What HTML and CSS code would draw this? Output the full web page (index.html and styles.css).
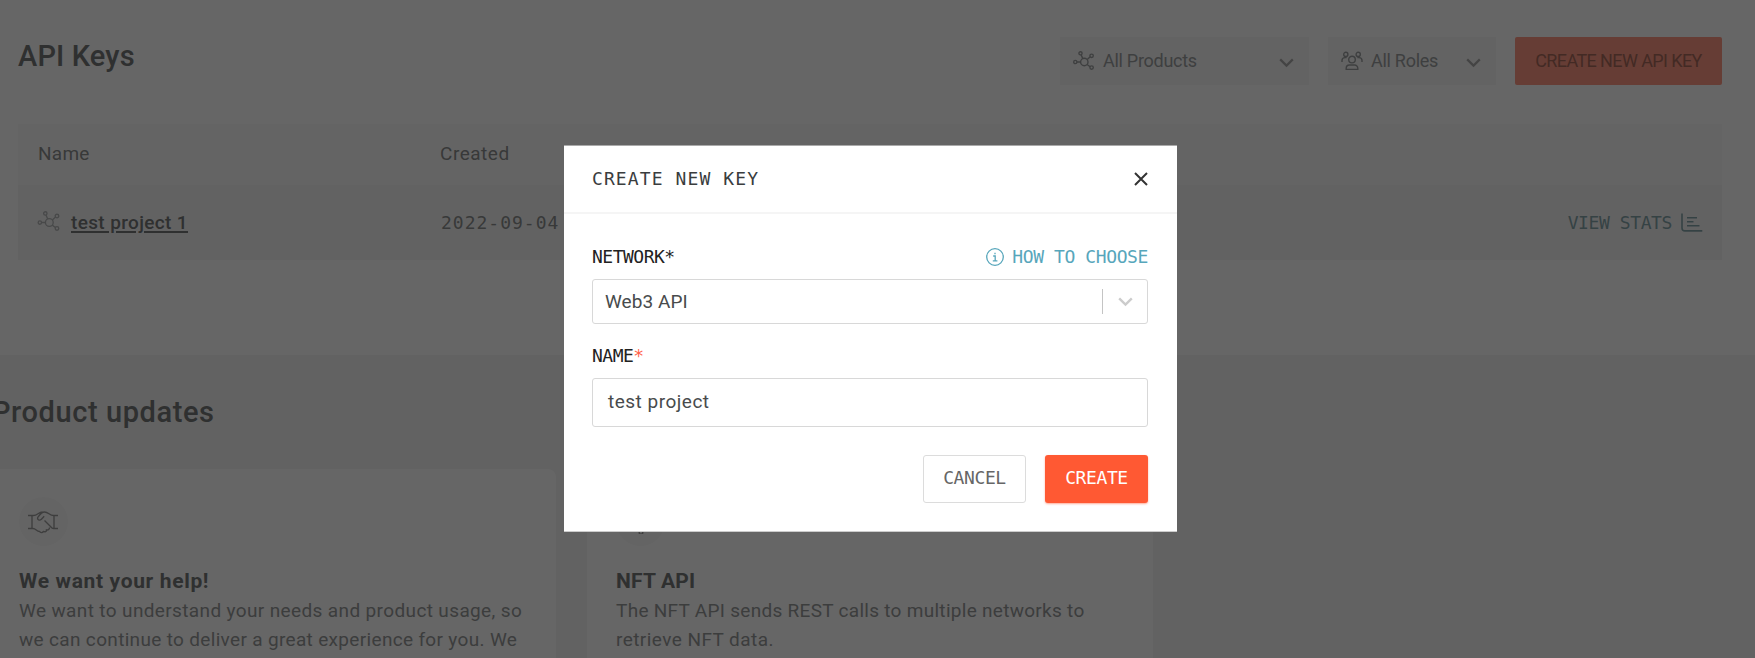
FILE: index.html
```html
<!DOCTYPE html>
<html lang="en">
<head>
<meta charset="utf-8">
<title>API Keys</title>
<link rel="stylesheet" href="styles.css">
</head>
<body>
<svg class="defs" aria-hidden="true">
  <symbol id="nodes" viewBox="0 0 22 20">
    <circle cx="11.3" cy="11" r="3.7"/><circle cx="2.3" cy="11" r="1.6"/><circle cx="7.5" cy="2.3" r="1.6"/><circle cx="18.6" cy="4.8" r="1.7"/><circle cx="18.6" cy="16.6" r="1.7"/>
    <path d="M3.9 11h3.7M8.1 3.8l1.7 3.8M17.2 5.8l-3 2.7M14.1 13.5l3 2.2"/>
  </symbol>
  <symbol id="chevron" viewBox="0 0 15 10"><path d="M1.2 1.4l6.3 6.2 6.3-6.2"/></symbol>
</svg>
<main class="page">
  <section class="keys">
    <header class="toolbar">
      <h1 class="title"><span class="t-keys">API Keys</span></h1>
      <div class="filter filter-products">
        <svg class="icon nodes" width="22" height="20"><use href="#nodes"/></svg>
        <span class="t-filter">All Products</span>
        <svg class="chevron" width="15" height="10"><use href="#chevron"/></svg>
      </div>
      <div class="filter filter-roles">
        <svg class="icon" width="22" height="20" viewBox="0 0 22 20">
          <circle cx="11" cy="8.6" r="3.3"/><circle cx="4.8" cy="3.4" r="2.1"/><circle cx="17.2" cy="3.4" r="2.1"/>
          <path d="M5.2 18.4v-1.2a3.2 3.2 0 0 1 3.2-3.2h5.2a3.2 3.2 0 0 1 3.2 3.2v1.2zM1 11V9.6a3 3 0 0 1 3-3h1.6M21 11V9.6a3 3 0 0 0-3-3h-1.6"/>
        </svg>
        <span class="t-filter">All Roles</span>
        <svg class="chevron" width="15" height="10"><use href="#chevron"/></svg>
      </div>
      <button class="new-key">CREATE NEW API KEY</button>
    </header>
    <div class="table">
      <div class="row head"><span class="t-name">Name</span><span class="t-created">Created</span></div>
      <div class="row item">
        <span class="project"><svg class="icon nodes light" width="24" height="21"><use href="#nodes"/></svg><a class="link">test project 1</a></span>
        <span class="date">2022-09-04</span>
        <a class="stats"><span>VIEW STATS</span>
          <svg width="22" height="19" viewBox="0 0 22 19"><path d="M1 .5v14.4a3 3 0 0 0 3 3h17.3M6 4.7h10M6 8.7h6.500M6 12.700h12.500"/></svg>
        </a>
      </div>
    </div>
  </section>
  <section class="updates">
    <h2 class="title"><span class="t-updates">Product updates</span></h2>
    <div class="cards">
      <article class="card first">
        <div class="badge">
          <svg width="32" height="24" viewBox="0 0 32 24"><path d="M1 5.500h5.500c4 0 5-3.500 9-3.500M31 5.500h-4.500c-4 0-5-3.500-9-3.500-3 0-5 3-6.500 5-1.500 2.400 1.500 4.200 3.400 2.200l2.800-3M5 5.500v13M27 5.500v13M1 18.500h5c3 0 3.500 3 6.500 3 1.500 1.500 3 1.500 4 0 1.500.8 3 0 3-1.600 2 .3 3-.8 3-2.300M17.500 10.500l7.500 7.500c1 1 2 .5 3 .500h3"/></svg>
        </div>
        <h3><span class="t-help">We want your help!</span></h3>
        <p><span class="t-l1">We want to understand your needs and product usage, so</span><br><span class="t-l2">we can continue to deliver a great experience for you. We</span></p>
      </article>
      <article class="card second">
        <div class="badge">
          <svg width="32" height="24" viewBox="0 0 32 24"><path d="M16 1l9 5v9l-9 6-9-6V6zM7 6l9 5 9-5M16 11v10"/><circle cx="16" cy="22.500" r="1.800"/></svg>
        </div>
        <h3><span class="t-nft">NFT API</span></h3>
        <p><span class="t-l3">The NFT API sends REST calls to multiple networks to</span><br><span class="t-l4">retrieve NFT data.</span></p>
      </article>
    </div>
  </section>
</main>
<div class="overlay">
  <div class="modal" role="dialog">
    <header class="modal-head">
      <span class="modal-title">CREATE NEW KEY</span>
      <svg class="close" width="14" height="14" viewBox="0 0 14 14"><path d="M1 1l12 12M13 1L1 13"/></svg>
    </header>
    <div class="modal-body">
      <div class="label-row">
        <span class="label">NETWORK*</span>
        <a class="choose"><svg width="18" height="18" viewBox="0 0 18 18"><circle cx="9" cy="9" r="8.300"/><path d="M7.200 8h2v4.800M6.800 12.900h4.600M9 4.700v1.500"/></svg><span>HOW TO CHOOSE</span></a>
      </div>
      <div class="select"><span class="t-web3">Web3 API</span><i class="sep"></i><svg class="chevron" width="15" height="10"><use href="#chevron"/></svg></div>
      <div class="label name-label">NAME<span class="required">*</span></div>
      <div class="input"><span class="t-test">test project</span></div>
      <div class="actions">
        <button class="btn cancel">CANCEL</button>
        <button class="btn create">CREATE</button>
      </div>
    </div>
  </div>
</div>
</body>
</html>
```

FILE: styles.css
```css
* { box-sizing: border-box; }
html, body { height: 100%; margin: 0; overflow: hidden; }
body { font-family: Roboto, "Liberation Sans", sans-serif; font-size: 18px; color: #8c8f8f; background: #fff; }
h1, h2, h3, p { margin: 0; }
button { font: inherit; border: 0; }
svg { fill: none; stroke: currentColor; flex: none; }
span { white-space: nowrap; }
.defs { position: absolute; width: 0; height: 0; }

.page { height: 658px; overflow: hidden; }
.keys { height: 355px; padding: 37px 33px 0 18px; }
.toolbar { display: flex; height: 48px; margin-bottom: 39px; }
.title { font-size: 29px; line-height: 36px; font-weight: 500; color: #757879; }
.toolbar .title { margin-right: auto; padding-top: 1px; }
.filter { display: flex; align-items: center; background: #f7f7f7; color: #9c9fa0; padding: 0 15px 0 12px; }
.filter .icon { margin: 0 8px 0 1px; stroke-width: 1.4; }
.filter .chevron { margin: 3px 0 0 auto; stroke-width: 2.2; color: #aaa; }
.filter-products { width: 249px; margin-right: 19px; }
.filter-roles { width: 168px; margin-right: 19px; }
.filter span { padding-bottom: 2px; }
.new-key { width: 207px; padding: 0 0 2px; background: #ff9a85; color: #a8695b; border-radius: 2px; letter-spacing: -.6px; }

.table { background: #fbfbfb; }
.row { display: flex; align-items: center; padding: 0 20px; }
.row > :first-child { width: 402px; }
.head { height: 61px; padding-bottom: 2px; font-size: 19px; }
.item { height: 75px; background: #f6f6f6; }
.project { display: flex; align-items: center; }
.light { color: #b4b6b7; stroke-width: 1.3; margin: -3px 10px 0 -1px; }
.link { font-size: 19px; font-weight: 500; color: #757879; text-decoration: underline; text-decoration-thickness: 1.5px; text-underline-offset: 2px; white-space: nowrap; letter-spacing: .36px; }
.date, .stats, .modal, .btn { font-family: "DejaVu Sans Mono", monospace; }
.date { margin-left: 1px; font-size: 18px; letter-spacing: 1px; }
.stats { display: flex; align-items: center; gap: 9px; margin: 0 -1px 0 auto; color: #86a5ab; font-size: 18px; letter-spacing: -.4px; }
.stats svg { stroke-width: 1.6; }

.updates { height: 303px; padding-top: 39px; background: #f4f4f4; }
.updates .title { margin: 0 0 39px -8px; }
.cards { display: flex; gap: 31px; }
.card { height: 220px; padding: 28px 28px 0 19px; background: #fff; border-radius: 8px; }
.first { width: 556px; border-radius: 0 8px 0 0; }
.second { width: 566px; padding-left: 29px; }
.badge { display: flex; align-items: center; justify-content: center; width: 49px; height: 49px; margin-bottom: 20px; border-radius: 50%; background: #fbfbfb; color: #9c9c9c; }
.badge svg { stroke-width: 1.4; }
.first .badge svg { margin-right: 2px; }
.card h3 { font-size: 21px; line-height: 30px; font-weight: 700; color: #757879; }
.card p { padding-top: 1px; font-size: 19px; line-height: 28.8px; color: #97999a; }

.t-keys { letter-spacing: .15px; }
.t-updates { letter-spacing: .58px; }
.t-name { letter-spacing: .25px; }
.t-created { letter-spacing: .52px; }
.t-filter { letter-spacing: -.28px; }
.t-help { letter-spacing: .65px; }
.t-nft { letter-spacing: .2px; }
.t-l1 { letter-spacing: .37px; }
.t-l2 { letter-spacing: .33px; }
.t-l3 { letter-spacing: .29px; }
.t-l4 { letter-spacing: .44px; }
.t-web3 { letter-spacing: .05px; }
.t-test { letter-spacing: .5px; }

.overlay { position: absolute; inset: 0; background: rgba(0, 0, 0, .6); }
.modal { position: absolute; left: 564px; top: 145px; width: 613px; height: 387px; background: #fff; border-top: 1px solid #aaa; border-bottom: 1px solid #ccc; color: #3a3d3e; font-size: 18px; }
.modal-head { display: flex; align-items: center; justify-content: space-between; height: 68px; padding: 0 29px 0 28px; border-bottom: 2px solid #f5f5f5; }
.modal-title { padding-bottom: 2px; font-size: 18px; letter-spacing: 1.1px; }
.close { stroke-width: 2; color: #333; }
.modal-body { padding: 29px 29px 0 28px; }
.label-row { display: flex; align-items: center; justify-content: space-between; height: 27px; margin-bottom: 9px; }
.label { color: #222; letter-spacing: -.5px; }
.choose { display: flex; align-items: center; gap: 9px; color: #57a6bb; letter-spacing: -.4px; }
.choose svg { stroke-width: 1.3; margin-right: -1px; }
.select, .input { display: flex; align-items: center; border: 1px solid #d8d8d8; border-radius: 3px; font-family: Roboto, "Liberation Sans", sans-serif; font-size: 19px; color: #484b4c; }
.select { height: 45px; padding: 0 14px 1px 12px; }
.sep { width: 1px; height: 25px; margin: 0 15px 0 auto; background: #c4c4c4; }
.select .chevron { stroke-width: 2.400; color: #ccc; margin-top: 2px; }
.name-label { margin-top: 18px; height: 28px; line-height: 28px; }
.required { color: #ff5f4a; }
.input { height: 49px; margin-top: 8px; padding: 0 15px 3px; }
.actions { display: flex; justify-content: flex-end; gap: 19px; margin-top: 28px; }
.btn { height: 48px; padding: 0 0 3px; border-radius: 3px; letter-spacing: -.4px; font-size: 18px; }
.cancel { width: 103px; background: #fff; border: 1px solid #dcdcdc; color: #666; }
.create { width: 103px; background: #ff5933; color: #fff; box-shadow: 0 1px 2px rgba(255, 89, 51, .5); }
```
